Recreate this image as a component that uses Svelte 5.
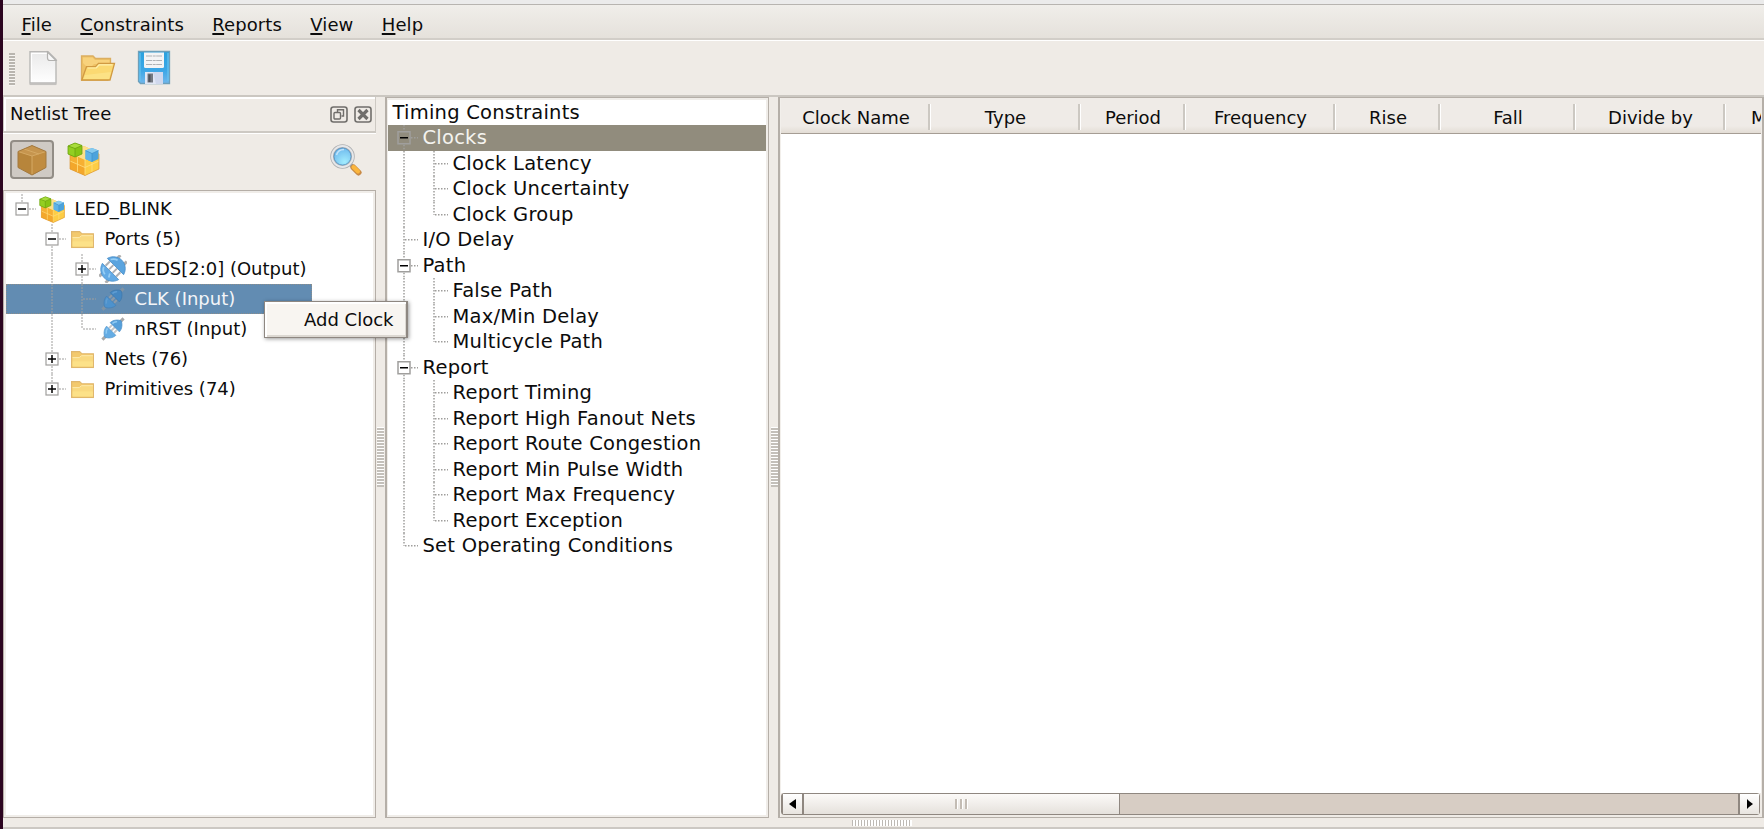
<script>
  const menus = ['File', 'Constraints', 'Reports', 'View', 'Help'];

  // Guide cells: v = line through, t = tee, l = elbow, e = last/only box, b = box with siblings below, s = blank
  const netlist = [
    { cells: 'e', box: '-', icon: 'cubes', text: 'LED_BLINK' },
    { cells: 'sb', box: '-', icon: 'folder', text: 'Ports (5)' },
    { cells: 'svb', box: '+', icon: 'bus', text: 'LEDS[2:0] (Output)' },
    { cells: 'svt', icon: 'port', text: 'CLK (Input)', selected: true },
    { cells: 'svl', icon: 'port', text: 'nRST (Input)' },
    { cells: 'sb', box: '+', icon: 'folder', text: 'Nets (76)' },
    { cells: 'se', box: '+', icon: 'folder', text: 'Primitives (74)' },
  ];

  const timing = [
    { cells: '', text: 'Timing Constraints' },
    { cells: 'b', box: '-', text: 'Clocks', selected: true },
    { cells: 'vt', text: 'Clock Latency' },
    { cells: 'vt', text: 'Clock Uncertainty' },
    { cells: 'vl', text: 'Clock Group' },
    { cells: 't', text: 'I/O Delay' },
    { cells: 'b', box: '-', text: 'Path' },
    { cells: 'vt', text: 'False Path' },
    { cells: 'vt', text: 'Max/Min Delay' },
    { cells: 'vl', text: 'Multicycle Path' },
    { cells: 'b', box: '-', text: 'Report' },
    { cells: 'vt', text: 'Report Timing' },
    { cells: 'vt', text: 'Report High Fanout Nets' },
    { cells: 'vt', text: 'Report Route Congestion' },
    { cells: 'vt', text: 'Report Min Pulse Width' },
    { cells: 'vt', text: 'Report Max Frequency' },
    { cells: 'vl', text: 'Report Exception' },
    { cells: 'l', text: 'Set Operating Conditions' },
  ];

  const columns = [
    ['Clock Name', 149], ['Type', 150], ['Period', 105], ['Frequency', 150],
    ['Rise', 105], ['Fall', 135], ['Divide by', 150], ['Multiply by', 150],
  ];
</script>

{#snippet guide(kind, box, h, selected)}
  {@const m = h / 2}
  <svg class="guide" width="30" height={h} viewBox="0 0 30 {h}">
    {#if kind === 'v' || kind === 't'}<path class="dots" d="M15 0V{h}" />{/if}
    {#if kind === 'l'}<path class="dots" d="M15 0V{m}" />{/if}
    {#if kind === 't' || kind === 'l'}<path class="dots" d="M16 {m}H29" />{/if}
    {#if kind === 'b' || kind === 'e'}
      <path class="dots" d="M15 0V{m - 7}" />
      {#if kind === 'b'}<path class="dots" d="M15 {m + 7}V{h}" />{/if}
      <path class="dots" d="M22 {m}H29" />
      <rect class="box" x="9" y={m - 6} width="12" height="12" fill={selected ? 'none' : '#fff'} stroke="#a09f9d" />
      <path class="sign" d="M11 {m}H19" stroke="#000" />
      {#if box === '+'}<path class="sign" d="M15 {m - 4}V{m + 4}" stroke="#000" />{/if}
    {/if}
  </svg>
{/snippet}

{#snippet cubes(size)}
  <svg width={size} height={size} viewBox="0 0 34 34">
    <path d="M3 11L17 4 32 11V27L18 33.500 3 27Z" fill="#fbc23c" />
    <path d="M3 11L18 18V33.500L3 27Z" fill="#f6b032" />
    <path d="M18 18L32 11V27L18 33.500Z" fill="#fdcd45" />
    <path d="M3 11L17 4 32 11 18 18Z" fill="#fde08a" />
    <path d="M3 19L18 25.500V33.500L3 27Z" fill="#f2a126" opacity=".6" />
    <path d="M3 19L18 25.500 32 19M10.500 15V30M25 16V30M18 18V33" stroke="#ffdf80" stroke-width=".8" fill="none" />
    <path d="M3 12V27L18 33.500 32 27V12" stroke="#dd9838" stroke-width=".7" fill="none" />
    <path d="M18.500 8.500L25 6 31.500 8.500V17L25 20 18.500 17Z" fill="#4ba3dc" />
    <path d="M18.500 8.500L25 6 31.500 8.500 25 11.500Z" fill="#86caee" />
    <path d="M25 11.500V20L18.500 17V8.500Z" fill="#5fb3e6" />
    <path d="M18.500 8.500L25 11.500 31.500 8.500M25 11.500V20" stroke="#3d8fc7" stroke-width=".7" fill="none" />
    <path d="M1 4L8 1 15 3.500V12L8 15 1 12Z" fill="#86c414" />
    <path d="M1 4L8 1 15 3.500 8 6.500Z" fill="#a8dc3c" />
    <path d="M8 6.500V15L1 12V4Z" fill="#93cf22" />
    <path d="M1 4L8 1 15 3.500V12L8 15 1 12ZL8 6.500 15 3.500M8 6.500V15" stroke="#6ca20f" stroke-width=".8" fill="none" />
  </svg>
{/snippet}

{#snippet folder()}
  <svg width="25" height="19" viewBox="0 0 26 20">
    <path d="M1.500 18V1.700H10L12.500 4H24.500V18Z" fill="#f3c96d" stroke="#e0b76e" stroke-width="1.200" />
    <path d="M2.500 18V8H9.500L12 6H24V18Z" fill="#f9d980" />
    <path d="M2.500 8H9.500L12 6H24" stroke="#fdebb0" fill="none" />
    <path d="M2.500 12H24V17H2.500Z" fill="#fde48c" opacity=".7" />
    <path d="M1 18.400H25" stroke="#e0b76a" stroke-width="1.200" />
  </svg>
{/snippet}

{#snippet port(dim)}
  <svg width="26" height="26" viewBox="0 0 26 26">
    <g transform="rotate(-45 13 13)">
      <path d="M-2 13H5M21 13H28" stroke={dim ? '#8193a3' : '#a9a9a9'} stroke-width="3" />
      <path d="M9 13H17M11 9.500H15M11 16.500H15" stroke={dim ? '#8d9ba8' : '#c6c6c6'} stroke-width="2" />
      <path d="M1.500 13C2.500 10 6.500 6.500 10.500 6.500V19.500C6.500 19.500 2.500 16 1.500 13Z" fill={dim ? '#4d92cd' : '#64ace4'} stroke={dim ? '#437fb5' : '#5598cf'} stroke-width=".7" />
      <path d="M24.500 13C23.500 10 19.500 6.500 15.500 6.500V19.500C19.500 19.500 23.500 16 24.500 13Z" fill={dim ? '#4587c1' : '#559fda'} stroke={dim ? '#3e78ab' : '#4b8fc8'} stroke-width=".7" />
      <path d="M5 11.500C6.500 9.500 8 8.700 9.500 8.700M16.500 8.700C18.500 8.700 20 9.500 21 10.800" stroke={dim ? '#5f9dd2' : '#8fcaf3'} stroke-width="1.600" fill="none" />
    </g>
  </svg>
{/snippet}

{#snippet bus()}
  <svg width="28" height="28" viewBox="0 0 28 28">
    <g transform="rotate(-45 14 14)">
      <path d="M-1 9.500H5M-1 18.500H5M23 9.500H29M23 18.500H29" stroke="#b0b0b0" stroke-width="3" />
      <path d="M11 6.500H17M11 11.500H17M11 16.500H17M11 21.500H17" stroke="#aeb0b3" stroke-width="2" />
      <path d="M1.500 14C1.500 9 5 4 10.500 2.500V25.500C5 24 1.500 19 1.500 14Z" fill="#62aae5" stroke="#5093cc" stroke-width=".8" />
      <path d="M26.500 14C26.500 9 23 4 17.500 2.500V25.500C23 24 26.500 19 26.500 14Z" fill="#5aa4df" stroke="#4b8fc9" stroke-width=".8" />
      <path d="M4.500 12C5 9 6.500 7 9 6M19 5.500C21.500 7 23 9 23.500 11M5 17L8.500 15" stroke="#96cef5" stroke-width="1.700" fill="none" />
    </g>
  </svg>
{/snippet}

<div class="window">
  <div class="topstrip"></div>
  <nav class="menubar">
    {#each menus as m}<span><u>{m[0]}</u>{m.slice(1)}</span>{/each}
  </nav>

  <div class="toolbar">
    <i class="handle"></i>
    <svg class="new" width="30" height="36" viewBox="0 0 30 36">
      <defs><linearGradient id="pg" x2="0" y2="1"><stop stop-color="#e9e9e9" /><stop offset="1" stop-color="#fff" /></linearGradient></defs>
      <path d="M1.500 34.300H28.500" stroke="#c4c2bf" stroke-width="1.500" />
      <path d="M2 1.800H20L28 9.500V33H2Z" fill="url(#pg)" stroke="#b9b8b6" stroke-width="1.400" />
      <path d="M3.500 32V3.300H19" stroke="#fff" stroke-width="1.200" fill="none" />
      <path d="M19.500 2V8Q19.500 10.500 22 10.500H28Z" fill="#f8f8f8" stroke="#b2b1af" stroke-width="1.200" />
    </svg>
    <svg class="open" width="36" height="28" viewBox="0 0 36 28">
      <path d="M1.500 26V2H13L15.500 4.500H30.500V13L28 26Z" fill="#efc266" stroke="#dcae60" stroke-width="1.300" />
      <path d="M3 9V3.500H12.500L15 6H29.500V10H14L12 12H6Z" fill="#f8d27c" />
      <path d="M1.800 26L6.500 12.700H15.500L18.500 9.300H34.500L30 26Z" fill="#fbd972" stroke="#d19a42" stroke-width="1.300" />
      <path d="M7.500 14H16.300L19.200 10.800H32.500" stroke="#fff0ae" stroke-width="1.200" fill="none" />
      <path d="M5 21L3.500 25H29L31 18Z" fill="#fce58d" opacity=".7" />
    </svg>
    <svg class="save" width="34" height="35" viewBox="0 0 34 35">
      <defs><linearGradient id="fl" x2="0" y2="1"><stop stop-color="#29a1de" /><stop offset=".6" stop-color="#3ea7e6" /><stop offset="1" stop-color="#71b7ec" /></linearGradient></defs>
      <path d="M1.500 1.500H32.500V33.500H3.500L1.500 31.500Z" fill="url(#fl)" stroke="#6d9fba" stroke-width="1.300" />
      <path d="M3 3V31M31 3V31" stroke="#69c4ee" stroke-width="1.200" />
      <path d="M7 2.500H27V16.500Q27 18 25.500 18H8.500Q7 18 7 16.500Z" fill="#f4f4f5" />
      <path d="M9 6H25M9 10.500H25M9 14.500H25" stroke="#b0b2b5" stroke-width="1.200" stroke-dasharray="6 .7 3 .5" />
      <path d="M8 22H26V34H8Z" fill="#e1e7f5" />
      <path d="M16 22H26V34H19Z" fill="#c5cfe8" opacity=".6" />
      <path d="M10.500 23.500H16V32.500H10.500Z" fill="#747982" />
      <path d="M11.500 24.500H13.500V32H11.500Z" fill="#4f545d" />
    </svg>
  </div>

  <main>
    <section class="dock">
      <header>
        <span>Netlist Tree</span>
        <svg width="18" height="17" viewBox="0 0 18 17" fill="none" stroke="#706e6b" stroke-width="1.600">
          <rect x="1" y="1" width="16" height="15" rx="2.500" />
          <path d="M7.500 6V3.800H13.500V10H11.500" stroke-width="1.400" /><rect x="4" y="6.500" width="6.500" height="6.500" rx="1" stroke-width="1.400" />
        </svg>
        <svg width="18" height="17" viewBox="0 0 18 17" fill="none" stroke="#706e6b" stroke-width="1.600">
          <rect x="1" y="1" width="16" height="15" rx="2.500" />
          <path d="M4.500 4L13.500 13M13.500 4L4.500 13" stroke-width="3.200" />
        </svg>
      </header>
      <div class="tools">
        <button aria-label="Primitives">
          <svg width="30" height="32" viewBox="0 0 30 32">
            <path d="M1 7.500L15 1.500 29 7.500V23.500L15 31 1 23.500Z" fill="#b7853b" />
            <path d="M15 12L29 7.500V23.500L15 31Z" fill="#c08c40" />
            <path d="M1 7.500L15 1.500 29 7.500 15 12Z" fill="#c6954e" />
            <path d="M1 7.500L15 12 29 7.500M15 12V31M7 5L22 10" stroke="#d5a964" stroke-width="1" fill="none" />
            <path d="M1 7.500L15 1.500 29 7.500V23.500L15 31 1 23.500Z" stroke="#a37a40" stroke-width="1" fill="none" />
          </svg>
        </button>
        <div class="hier">{@render cubes(34)}</div>
        <svg class="find" width="32" height="34" viewBox="0 0 32 34">
          <defs><radialGradient id="gl" cx=".6" cy=".75" r=".8"><stop stop-color="#a2ecfe" /><stop offset="1" stop-color="#65b0ea" /></radialGradient></defs>
          <path d="M20 21L24 25" stroke="#8f8f8f" stroke-width="3.500" />
          <path d="M23.500 24.500L28.500 29.500" stroke="#c98a45" stroke-width="6" stroke-linecap="round" />
          <path d="M23.500 24L28 28.500" stroke="#fbb63e" stroke-width="4" stroke-linecap="round" />
          <circle cx="12.500" cy="13.500" r="10.500" fill="url(#gl)" stroke="#aeafb1" stroke-width="3.500" />
          <circle cx="12.500" cy="13.500" r="10.500" fill="none" stroke="#e6e7e9" stroke-width="1.900" />
          <circle cx="12.500" cy="13.500" r="8.500" fill="none" stroke="#5a8fbb" stroke-width=".8" />
          <path d="M6.500 12Q8 6.500 14 6.500" stroke="#c1e3fa" stroke-width="1.600" fill="none" />
        </svg>
      </div>
      <div class="tree net">
        {#each netlist as r}
          <div class="row" class:selected={r.selected}>
            {#each r.cells.split('') as c}{@render guide(c, r.box, 30, false)}{/each}
            <span class="icon">
              {#if r.icon === 'cubes'}{@render cubes(27)}
              {:else if r.icon === 'folder'}{@render folder()}
              {:else if r.icon === 'bus'}{@render bus()}
              {:else}{@render port(r.selected)}{/if}
            </span>
            <span class="label">{r.text}</span>
          </div>
        {/each}
      </div>
    </section>

    <div class="splitter"><i></i></div>

    <section class="tree timing">
      {#each timing as r}
        <div class="row" class:selected={r.selected}>
          {#each r.cells.split('') as c}{@render guide(c, r.box, 25.5, r.selected)}{/each}
          <span class="label">{r.text}</span>
        </div>
      {/each}
    </section>

    <div class="splitter right"><i></i></div>

    <section class="table">
      <div class="thead">
        {#each columns as [name, w]}<div style="width:{w}px">{name}</div>{/each}
      </div>
      <div class="tbody"></div>
      <div class="scroll">
        <span class="btn left"><svg width="8" height="10" viewBox="0 0 8 10"><path d="M0 5L4 2 7 0V10L4 8Z" /></svg></span>
        <span class="thumb"><i></i><i></i><i></i></span>
        <span class="trough"></span>
        <span class="btn end"><svg width="8" height="10" viewBox="0 0 8 10"><path d="M7 5L3 2 1 0V10L3 8Z" /></svg></span>
      </div>
    </section>
  </main>
  <footer><i></i></footer>

  <div class="popup">Add Clock</div>
</div>

<style>
  :global(body) { margin: 0; background: #efebe7; overflow: hidden; }
  .window {
    position: relative;
    box-sizing: border-box;
    width: 1764px;
    height: 829px;
    border-left: 3px solid #2c0520;
    background: #efebe6;
    color: #0c0c0c;
    font: 18px/1 "DejaVu Sans", sans-serif;
    display: flex;
    flex-direction: column;
    overflow: hidden;
    white-space: nowrap;
  }
  svg { display: block; flex: none; }
  .topstrip { height: 4px; background: #ebebeb; border-bottom: 1px solid #b7b4b0; flex: none; }
  .menubar {
    height: 33px;
    flex: none;
    display: flex;
    gap: 28.4px;
    padding-left: 18.5px;
    line-height: 39px;
    letter-spacing: 0.08px;
    background: linear-gradient(#f0eeea, #e5e1db);
    border-bottom: 2px solid #d2cec8;
  }
  .menubar span { height: 33px; }
  u { text-underline-offset: 2px; text-decoration-thickness: 1.5px; text-decoration-skip-ink: none; }
  .toolbar {
    height: 54px;
    flex: none;
    border-top: 1px solid #fff;
    border-bottom: 2px solid #cbc7c1;
    display: flex;
    align-items: flex-start;
  }
  .handle { width: 6px; height: 33px; margin: 12px 0 0 6px; background: repeating-linear-gradient(#b9b5af 0 2px, #f7f5f2 2px 3px); }
  .new { margin: 9px 0 0 13px; }
  .open { margin: 13px 0 0 22px; }
  .save { margin: 9px 0 0 21px; }

  main { height: 721px; flex: none; display: flex; }
  .dock { width: 373px; flex: none; display: flex; flex-direction: column; }
  .dock header {
    box-sizing: border-box;
    height: 36px;
    flex: none;
    border: 1px solid #cdc9c3;
    border-top: 0;
    border-bottom-width: 2px;
    box-shadow: inset 2px 2px #fff, 0 1px #fff;
    display: flex;
    align-items: center;
    gap: 6px;
    padding: 1px 3px 1px 6px;
  }
  .dock header span { flex: 1; }
  .tools { height: 57px; flex: none; display: flex; align-items: flex-start; }
  button {
    box-sizing: border-box;
    width: 44px;
    height: 39px;
    margin: 7px 0 0 7px;
    padding: 0;
    border: 2px solid #928d86;
    border-radius: 4px;
    background: #cfcac4;
    display: flex;
    justify-content: center;
    align-items: center;
  }
  .hier { margin: 9px 0 0 13px; }
  .find { margin: 10px 14px 0 auto; }

  .tree { box-sizing: border-box; background: #fff; overflow: hidden; }
  .row { display: flex; align-items: center; }
  .dots { stroke: #9f9e9c; stroke-width: 1.5; stroke-dasharray: 1.5 1.5; fill: none; }
  .box, .sign { stroke-width: 1.5; }
  .net { flex: 1; border: 1px solid #b5aea7; box-shadow: inset 0 0 0 2px #f0ede9; padding: 3px 2px; }
  .net .row { height: 30px; }
  .net .guide { position: relative; left: 0.5px; }
  .net .dots { stroke-width: 1; stroke-dasharray: 2 1; }
  .net .box { stroke-width: 1.2; }
  .net .row.selected { width: 306px; background: #628cb2; outline: 1px dotted #8c8d8b; outline-offset: -1px; color: #f3f5f8; }
  .icon { width: 30px; display: flex; justify-content: center; margin-left: 1.5px; }
  .net .label { margin-left: 7px; }

  .timing {
    width: 384px;
    flex: none;
    border: 1px solid #b5afa8;
    border-left-width: 2px;
    box-shadow: inset 1px 2px #f0ede9, inset -2px -2px #f0ede9;
    padding: 1.5px 2px 2px 1px;
    font-size: 19.5px;
    letter-spacing: 0.23px;
  }
  .timing .row { height: 25.5px; padding-left: 1px; }
  .timing .row.selected { background: #918c7d; color: #f4f3ef; }
  .timing .label { margin-left: 3.5px; }

  .splitter { width: 9px; flex: none; display: flex; align-items: center; }
  .splitter i { width: 7px; height: 60px; margin: 0 0 2px 1px; background: repeating-linear-gradient(#fff 0 1.5px, #c4c0ba 1.5px 3px); }
  .splitter.right i { margin-left: 2px; }

  .table {
    box-sizing: border-box;
    flex: 1;
    min-width: 0;
    border: 1px solid #b5afa8;
    border-width: 1px 2px 1px 2px;
    box-shadow: inset 1px 0 #f2efeb;
    padding: 0 1px 2px;
    display: flex;
    flex-direction: column;
  }
  .thead { height: 35px; flex: none; display: flex; overflow: hidden; border-bottom: 1px solid #a59d94; background: linear-gradient(#efebe7 80%, #e3ddd5); }
  .thead div {
    box-sizing: border-box;
    flex: none;
    height: 26px;
    margin-top: 6px;
    padding-left: 3px;
    line-height: 27px;
    text-align: center;
    border-right: 2px solid #ccc8c2;
    box-shadow: 1px 0 #fff;
  }
  .tbody { flex: 1; background: #fff; }
  .scroll { height: 22px; flex: none; display: flex; box-sizing: border-box; border: 1px solid #8f8780; border-radius: 3px; margin-right: 1px; }
  .btn { width: 20px; display: flex; align-items: center; justify-content: center; background: linear-gradient(#fff, #e8e4df); flex: none; box-sizing: border-box; }
  .left { border-left: 1px solid #8f8780; border-right: 2px solid #8f8780; width: 22px; }
  .end { border-left: 2px solid #8f8780; width: 21px; }
  .thumb { width: 316px; flex: none; box-sizing: border-box; border-right: 1px solid #8f8780; background: linear-gradient(#fcfaf8, #e5e1dc); display: flex; align-items: center; justify-content: center; gap: 2px; }
  .thumb i { width: 2px; height: 10px; background: #c3bcb4; border-right: 1px solid #fff; }
  .trough { flex: 1; background: #d7cdc4; }

  footer { height: 9px; flex: none; border-bottom: 2px solid #ccc8c3; }
  footer i { display: block; width: 60px; height: 6px; margin: 2px 0 0 849px; background: repeating-linear-gradient(90deg, #bdb9b4 0 1px, #fff 1px 3px); }

  .popup {
    position: absolute;
    left: 261px;
    top: 301px;
    box-sizing: border-box;
    width: 144px;
    height: 37px;
    padding-left: 39px;
    line-height: 36px;
    background: #f8f5f1;
    border: 1px solid #8e8781;
    border-right-width: 2px;
    box-shadow: inset 2px 2px #fff, inset -1px -2px #dcd8d2, 1px 1px 4px #0006;
  }
</style>
